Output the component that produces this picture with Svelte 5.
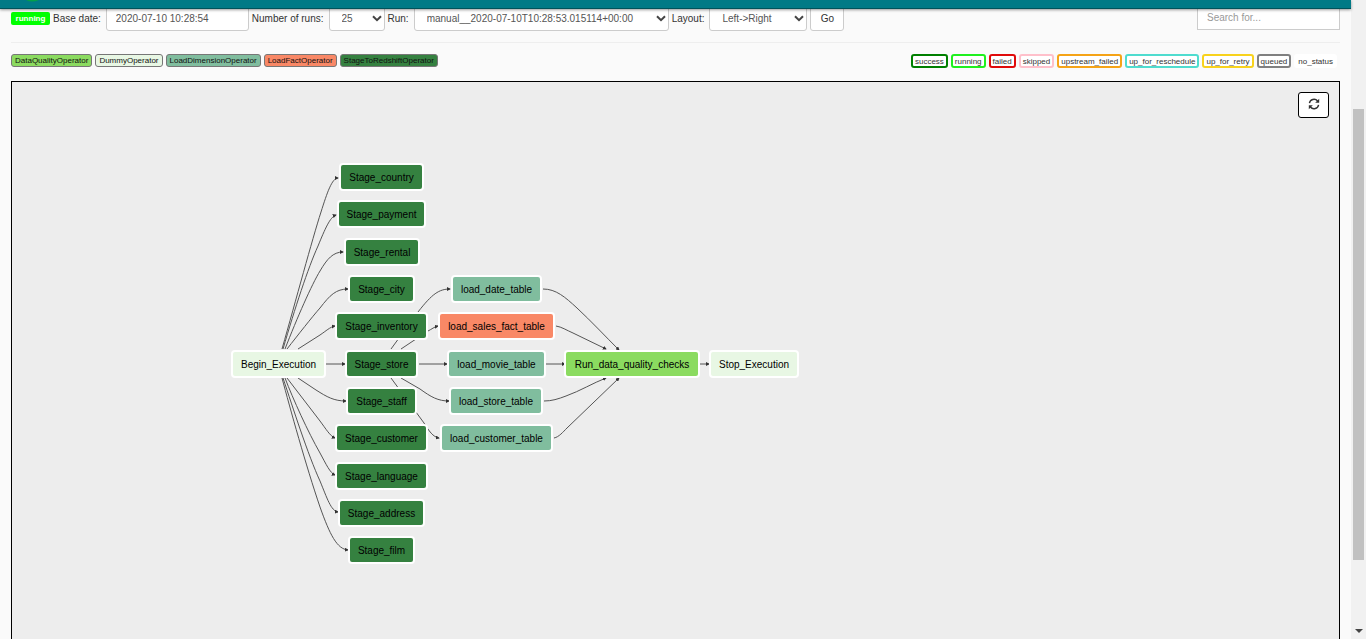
<script>
  const operators = [
    { name: 'DataQualityOperator', color: '#8bdb60' },
    { name: 'DummyOperator', color: '#e8f7e4' },
    { name: 'LoadDimensionOperator', color: '#80bd9e' },
    { name: 'LoadFactOperator', color: '#f98866' },
    { name: 'StageToRedshiftOperator', color: '#358140' }
  ];

  const states = [
    { name: 'success', color: '#008000' },
    { name: 'running', color: '#1ff01f' },
    { name: 'failed', color: '#e00b0b' },
    { name: 'skipped', color: '#ffc0cb' },
    { name: 'upstream_failed', color: '#f5a316' },
    { name: 'up_for_reschedule', color: '#4fdccf' },
    { name: 'up_for_retry', color: '#f8d21c' },
    { name: 'queued', color: '#808080' },
    { name: 'no_status', color: '#ffffff' }
  ];

  const stage = '#358140';
  const dimension = '#80bd9e';
  const dummy = '#e8f7e4';

  const nodes = [
    { name: 'Begin_Execution', x: 233, y: 352, w: 91, fill: dummy },
    { name: 'Stage_country', x: 341, y: 165, w: 81, fill: stage },
    { name: 'Stage_payment', x: 339, y: 202, w: 85, fill: stage },
    { name: 'Stage_rental', x: 346, y: 240, w: 72, fill: stage },
    { name: 'Stage_city', x: 350, y: 277, w: 63, fill: stage },
    { name: 'Stage_inventory', x: 337, y: 314, w: 89, fill: stage },
    { name: 'Stage_store', x: 347, y: 352, w: 69, fill: stage },
    { name: 'Stage_staff', x: 348, y: 389, w: 67, fill: stage },
    { name: 'Stage_customer', x: 337, y: 426, w: 89, fill: stage },
    { name: 'Stage_language', x: 337, y: 464, w: 89, fill: stage },
    { name: 'Stage_address', x: 340, y: 501, w: 83, fill: stage },
    { name: 'Stage_film', x: 350, y: 538, w: 63, fill: stage },
    { name: 'load_date_table', x: 453, y: 277, w: 87, fill: dimension },
    { name: 'load_sales_fact_table', x: 440, y: 314, w: 113, fill: '#f98866' },
    { name: 'load_movie_table', x: 449, y: 352, w: 95, fill: dimension },
    { name: 'load_store_table', x: 451, y: 389, w: 90, fill: dimension },
    { name: 'load_customer_table', x: 442, y: 426, w: 109, fill: dimension },
    { name: 'Run_data_quality_checks', x: 566, y: 352, w: 132, fill: '#8bdb60' },
    { name: 'Stop_Execution', x: 711, y: 352, w: 86, fill: dummy }
  ];

  const edges = [
    'M282 349C296 300 312 240 321 212C327 193 332 178 338 178',
    'M283 349C295 308 308 268 318 246C325 229 330 217 336 215',
    'M285 349C297 318 312 284 320 271C327 259 333 252 343 252',
    'M287 349C298 335 312 317 320 308C330 295 336 289 348 289',
    'M298 349L320 335C326 331 330 327 335 326',
    'M326 364L345 364',
    'M298 378L316 390C327 397 334 401 346 401',
    'M287 378L320 421C326 429 330 436 335 438',
    'M285 378C293 399 308 432 320 453C326 464 330 473 335 475',
    'M283 378C293 408 308 455 320 481C327 498 331 511 338 512',
    'M282 378C290 408 306 466 320 507C330 535 337 549 348 550',
    'M391 349L418 312C432 294 439 289 450 289',
    'M401 349L428 331C432 329 434 327 438 326',
    'M419 364L447 364',
    'M401 378L420 389C431 397 438 401 449 401',
    'M391 378L424 423C429 431 433 437 439 438',
    'M543 289C556 289 565 297 577 308C591 321 606 337 619 350',
    'M556 326C562 327 566 330 573 333L606 349',
    'M546 364L565 364',
    'M544 401C552 401 558 399 566 396C580 391 593 383 606 378',
    'M554 438C559 437 563 432 567 428L619 378',
    'M700 364L709 364'
  ];
</script>

{#snippet chevron()}
  <svg class="chevron" width="10" height="7" viewBox="0 0 10 7" aria-hidden="true">
    <path d="M1 1.2L5 5.2L9 1.2" fill="none" stroke="#444" stroke-width="2" />
  </svg>
{/snippet}

<div class="window">
  <div class="page">
    <nav aria-label="Main">
      <svg width="20" height="4" viewBox="0 0 20 4" aria-hidden="true">
        <path d="M4 0Q10 3 17 0Z" fill="#04a04a" />
      </svg>
    </nav>

    <main>
      <form class="toolbar" onsubmit={(e) => e.preventDefault()}>
        <span class="badge">running</span>
        <label for="base-date">Base date:</label>
        <input id="base-date" class="date" type="text" value="2020-07-10 10:28:54" />
        <label for="runs">Number of runs:</label>
        <div class="select runs">
          <select id="runs"><option>25</option></select>
          {@render chevron()}
        </div>
        <label for="run">Run:</label>
        <div class="select run">
          <select id="run"><option>manual__2020-07-10T10:28:53.015114+00:00</option></select>
          {@render chevron()}
        </div>
        <label for="layout">Layout:</label>
        <div class="select layout">
          <select id="layout"><option>Left-&gt;Right</option></select>
          {@render chevron()}
        </div>
        <button class="go" type="submit">Go</button>
        <input class="search" type="text" placeholder="Search for..." aria-label="Search for" />
      </form>

      <div class="legend">
        <div class="tags">
          {#each operators as op}
            <span class="operator" style:background={op.color}>{op.name}</span>
          {/each}
        </div>
        <div class="tags">
          {#each states as state}
            <span class="state" style:border-color={state.color}>{state.name}</span>
          {/each}
        </div>
      </div>

      <section class="graph">
        <svg class="dag" viewBox="12 82 800 500" width="800" height="500">
          <defs>
            <marker id="arrow" viewBox="0 0 10 10" refX="8" refY="5" markerWidth="4" markerHeight="4" orient="auto" markerUnits="userSpaceOnUse">
              <path d="M0 0L10 5L0 10Z" fill="#333" />
            </marker>
          </defs>
          {#each edges as d}
            <path class="edge" {d} marker-end="url(#arrow)" />
          {/each}
          {#each nodes as node}
            <rect x={node.x - 1} y={node.y - 1} width={node.w + 2} height="26" rx="3" fill={node.fill} />
            <text x={node.x + node.w / 2} y={node.y + 16}>{node.name}</text>
          {/each}
        </svg>
        <button class="refresh" type="button" aria-label="Refresh">
          <svg width="12" height="12" viewBox="0 0 12 12" aria-hidden="true">
            <g fill="none" stroke="#333" stroke-width="1.4">
              <path d="M1.4 5.2A4.7 4.7 0 0 1 9.6 3" />
              <path d="M10.6 6.8A4.7 4.7 0 0 1 2.4 9" />
            </g>
            <path d="M11.200 0.800V4.800H7.200Z" fill="#333" />
            <path d="M0.800 11.200V7.200H4.800Z" fill="#333" />
          </svg>
        </button>
      </section>
    </main>
  </div>

  <div class="scrollbar" aria-hidden="true">
    <div class="thumb"></div>
    <svg width="8" height="4" viewBox="0 0 8 4"><path d="M0 0H8L4 4Z" fill="#444" /></svg>
  </div>
</div>

<style>
  :global(body) {
    margin: 0;
    background: #fafafa;
  }

  .window {
    display: grid;
    grid-template-columns: minmax(0, 1fr) 15px;
    height: 100vh;
    overflow: hidden;
    font-family: 'Liberation Sans', Arial, sans-serif;
    font-size: 10px;
    color: #333;
  }

  .page {
    display: flex;
    flex-direction: column;
    min-height: 0;
    background: #fafafa;
  }

  nav {
    position: relative;
    z-index: 1;
    display: flex;
    flex: none;
    box-sizing: border-box;
    height: 9px;
    padding-left: 22px;
    background: #017a86;
    border-bottom: 1px solid #01525a;
    box-shadow: 0 1px 3px rgba(0, 0, 0, 0.4);
  }

  main {
    display: flex;
    flex: 1;
    flex-direction: column;
    min-height: 0;
    margin-top: -4px;
    padding: 0 11px;
  }

  .toolbar {
    display: flex;
    align-items: center;
    gap: 3px;
    height: 26px;
    padding-bottom: 11px;
    border-bottom: 1px solid #eee;
  }

  .badge {
    box-sizing: border-box;
    width: 39px;
    height: 13px;
    border-radius: 2px;
    background: #0f0;
    color: #fff;
    font-size: 8px;
    font-weight: bold;
    line-height: 14px;
    text-align: center;
  }

  label {
    padding-right: 2px;
    white-space: nowrap;
  }

  input,
  select,
  .go {
    box-sizing: border-box;
    height: 26px;
    border: 1px solid #ccc;
    border-radius: 3px;
    background: #fff;
    color: #555;
    font: inherit;
  }

  input {
    padding: 0 9px;
  }

  .date {
    width: 143px;
  }

  .select {
    display: grid;
    align-items: center;
  }

  select {
    grid-area: 1 / 1;
    width: 100%;
    padding: 0 12px;
    appearance: none;
  }

  .chevron {
    grid-area: 1 / 1;
    justify-self: end;
    margin-right: 3px;
    pointer-events: none;
  }

  .runs {
    width: 56px;
  }

  .run {
    width: 255px;
  }

  .layout {
    width: 98px;
  }

  .go {
    width: 34px;
    padding: 0;
    color: #333;
  }

  .search {
    align-self: flex-start;
    width: 143px;
    height: 25px;
    margin-left: auto;
    border-radius: 0;
  }

  .search::placeholder {
    color: #999;
  }

  .legend {
    display: flex;
    align-items: flex-start;
    justify-content: space-between;
    height: 14px;
    padding: 11px 0 13px;
  }

  .tags {
    display: flex;
    align-items: flex-start;
    gap: 3px;
    font-size: 8px;
    white-space: nowrap;
  }

  .tags:last-child {
    padding-right: 3px;
  }

  .operator,
  .state {
    box-sizing: border-box;
    border-radius: 3px;
    color: #111;
  }

  .operator {
    height: 13px;
    padding: 0 3px;
    border: 1px solid #777;
    line-height: 11px;
  }

  .state {
    height: 14px;
    padding: 0 2px;
    border: 2px solid;
    background: #fff;
    color: #333;
    line-height: 11px;
  }

  .graph {
    display: flex;
    flex: 1;
    align-items: flex-start;
    justify-content: space-between;
    min-height: 0;
    border: 1px solid #000;
    border-bottom: 0;
    background: #ededed;
  }

  .dag {
    display: block;
  }

  .edge {
    fill: none;
    stroke: #555;
    stroke-width: 1;
  }

  rect {
    stroke: #fff;
    stroke-width: 2;
  }

  text {
    fill: #000;
    font-size: 10px;
    text-anchor: middle;
  }

  .refresh {
    display: grid;
    place-items: center;
    width: 31px;
    height: 26px;
    margin: 10px;
    padding: 0 0 2px;
    border: 1px solid #000;
    border-radius: 3px;
    background: #fff;
  }

  .scrollbar {
    display: flex;
    flex-direction: column;
    align-items: center;
    justify-content: space-between;
    box-sizing: border-box;
    padding: 109px 0 6px;
    background: #f1f1f1;
  }

  .thumb {
    width: 11px;
    flex: 0 0 86%;
    background: #c1c1c1;
  }
</style>
